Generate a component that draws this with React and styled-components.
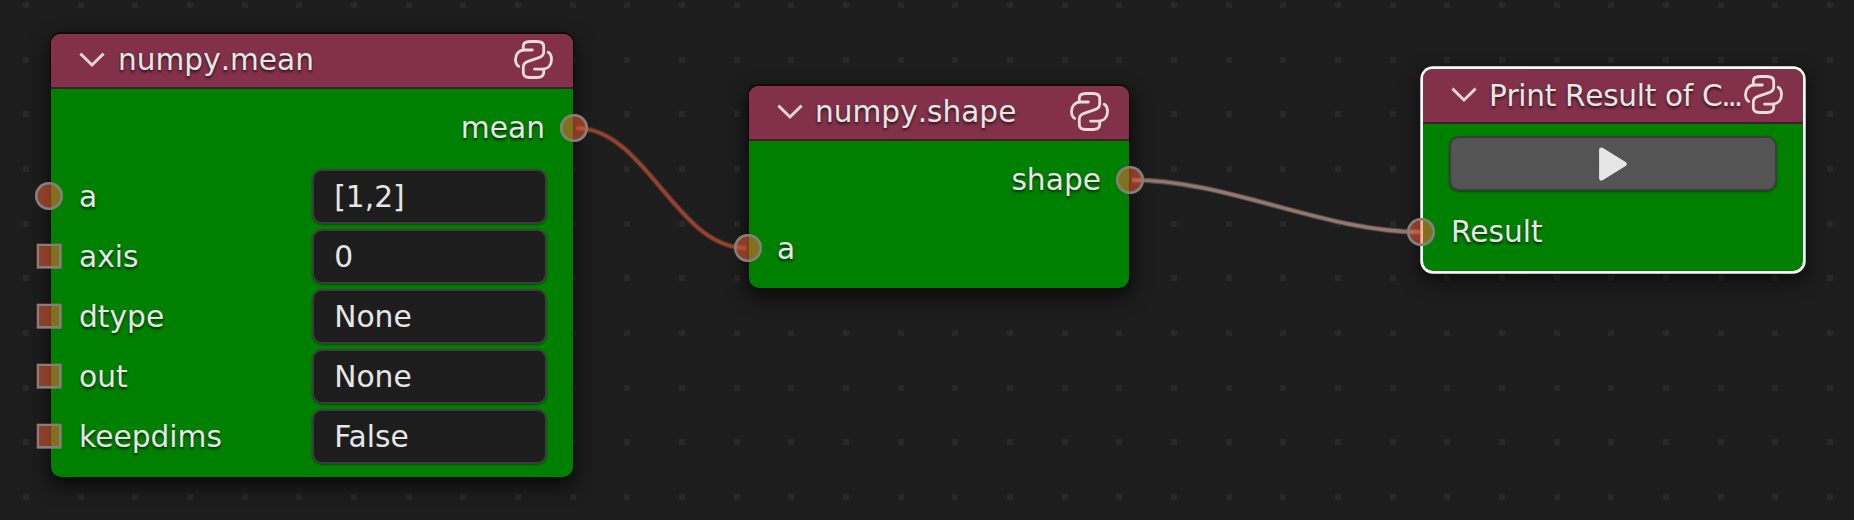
import React from 'react';
import styled, { createGlobalStyle } from 'styled-components';

const GlobalStyle = createGlobalStyle`
  body { margin: 0; background: #1d1d1d; }
  * { box-sizing: border-box; }
`;

const Canvas = styled.main`
  position: relative;
  width: 1854px;
  height: 520px;
  overflow: hidden;
  background: #1d1d1d;
  color: #e6e6e6;
  font-family: "DejaVu Sans", sans-serif;
  font-size: 29.7px;
`;

const Layer = styled.svg`
  position: absolute;
  inset: 0;
  width: 1854px;
  height: 520px;
`;

const NodeCard = styled.section`
  position: absolute;
  left: ${(p) => p.$x}px;
  top: ${(p) => p.$y}px;
  width: ${(p) => p.$w}px;
  height: ${(p) => p.$h}px;
  display: flex;
  flex-direction: column;
  border-radius: 10px;
  background: #008000;
  box-shadow: ${(p) =>
    p.$selected
      ? '0 0 0 2.7px #fff, 0 7px 18px 4px rgba(0,0,0,0.55)'
      : '0 -1px 0 1px rgba(0,0,0,0.5), 0 7px 18px 3px rgba(0,0,0,0.6)'};
`;

const Header = styled.header`
  display: flex;
  align-items: center;
  flex: none;
  height: 55px;
  padding: 0 20px 2px 28px;
  border-radius: 9px 9px 0 0;
  border-bottom: 2px solid #3f2026;
  background: #83314a;
`;

const Title = styled.h1`
  flex: 1;
  display: flex;
  min-width: 0;
  margin: 0 0 0 ${(p) => p.$gap}px;
  padding-top: ${(p) => p.$drop}px;
  white-space: nowrap;
  font-size: 29.6px;
  font-weight: 400;
  font-kerning: none;
  letter-spacing: ${(p) => (p.$tight ? '-0.32px' : 'normal')};
  line-height: 50px;
  text-shadow: 0 2px 3px rgba(0, 0, 0, 0.7);
`;

const Dots = styled.span`
  margin-left: -1px;
  letter-spacing: -3.2px;
`;

const Icon = styled.svg`
  flex: none;
  display: block;
`;

const Row = styled.div`
  position: relative;
  flex: none;
  display: flex;
  align-items: center;
  justify-content: ${(p) => (p.$out ? 'flex-end' : 'space-between')};
  height: 60px;
  margin-top: ${(p) => p.$gap || 0}px;
  padding: 0 ${(p) => (p.$out ? 28 : 26.4)}px 0 28px;
`;

const Label = styled.span`
  line-height: 40px;
  text-shadow: 0 2px 3px rgba(0, 0, 0, 0.7);
`;

const Field = styled.div`
  width: 234.4px;
  height: 55px;
  padding-left: 20px;
  border: 2px solid #3d3d3d;
  border-radius: 10px;
  background: #1d1d1d;
  line-height: 52px;
  box-shadow: 0 1px 2px rgba(0, 0, 0, 0.4);
`;

const Socket = styled.i`
  position: absolute;
  top: 50%;
  ${(p) => (p.$out ? 'right: -1px' : `left: ${p.$edge ?? -2}px`)};
  width: ${(p) => (p.$square ? 25 : 28)}px;
  height: ${(p) => (p.$square ? 25 : 28)}px;
  margin-top: -0.5px;
  border-radius: ${(p) => (p.$square ? 0 : '50%')};
  background: rgba(255, 99, 56, 0.5);
  box-shadow: inset 0 0 0 2.6px #808080;
  transform: translate(${(p) => (p.$out ? '50%' : '-50%')}, -50%);
`;

const RunButton = styled.button`
  flex: none;
  display: flex;
  align-items: center;
  justify-content: center;
  height: 55px;
  margin: 12px 26px 0;
  padding: 0;
  border: 2px solid #3d3d3d;
  border-radius: 10px;
  background: #545454;
  box-shadow: 0 1px 2px rgba(0, 0, 0, 0.4);
`;

const Chevron = () => (
  <Icon width="26" height="18" viewBox="0 0 26 18" fill="none">
    <path d="M1.4 2.6 13 14 24.6 2.6" stroke="#e3d4d9" strokeWidth="2.9" />
  </Icon>
);

const Python = () => (
  <Icon width="39" height="39" viewBox="0 0 39 39" fill="none" stroke="#e6dcdf" strokeWidth="2.8" strokeLinecap="round">
    <path d="M18.3 10H11C4.5 10 1.5 14.5 1.5 19.5C1.5 22.5 2.5 25 4.7 26.4" />
    <path d="M9.3 9.5V6.2C9.3 2.8 12.2 1.5 16 1.5H23C27.2 1.5 29.7 3 29.7 6.5V12C29.7 15.2 28.4 16.5 25 17.6L14 21.4C10.6 22.6 9.3 24 9.3 27V32.5C9.3 36 11.5 37.5 15.5 37.5H23C27.2 37.5 29.7 36 29.7 32.5V29.3" />
    <path d="M20.5 29.1H28C34.5 29.1 37.5 24.5 37.5 19.5C37.5 16.4 36.2 13.4 34.2 12.3" />
  </Icon>
);

const Play = () => (
  <Icon width="28" height="34" viewBox="0 0 28 34">
    <path d="M2.4 2.8 25.4 17 2.4 31.2Z" fill="#e6e6e6" stroke="#e6e6e6" strokeWidth="4.6" strokeLinejoin="round" />
  </Icon>
);

const NodeHeader = ({ title, clipped, gap = 12, drop = 0 }) => (
  <Header>
    <Chevron />
    <Title $gap={gap} $drop={drop} $tight={clipped}>
      {title}
      {clipped && <Dots>...</Dots>}
    </Title>
    <Python />
  </Header>
);

const Wire = ({ d, color }) => (
  <g stroke={color}>
    <path d={d} strokeWidth="5.4" strokeOpacity="0.5" />
    <path d={d} strokeWidth="3.2" />
  </g>
);

const PITCH = 54.67;
const dots = [];
for (let r = 0; r < 10; r += 1) {
  for (let c = 0; c < 34; c += 1) {
    dots.push([Math.round(23 + c * PITCH), Math.round(2 + r * PITCH)]);
  }
}

const params = [
  ['a', '[1,2]'],
  ['axis', '0'],
  ['dtype', 'None'],
  ['out', 'None'],
  ['keepdims', 'False'],
];

export default function App() {
  return (
    <Canvas>
      <GlobalStyle />
      <Layer fill="none">
        {dots.map(([x, y]) => (
          <rect key={`${x}-${y}`} x={x} y={y} width="6" height="6" fill="#282828" />
        ))}
        <Wire d="M576 128C646 128 676 248 746 248" color="#92442e" />
        <Wire d="M1132 180C1228 180 1324 232 1420 232" color="#94776f" />
      </Layer>

      <NodeCard $x={51} $y={34} $w={522} $h={442.5}>
        <NodeHeader title="numpy.mean" gap={13} />
        <Row $out $gap={9}>
          <Label>mean</Label>
          <Socket $out />
        </Row>
        {params.map(([name, value], i) => (
          <Row key={name} $gap={i === 0 ? 8.5 : 0}>
            <Socket $square={i > 0} />
            <Label>{name}</Label>
            <Field>{value}</Field>
          </Row>
        ))}
      </NodeCard>

      <NodeCard $x={749} $y={86} $w={380} $h={202}>
        <NodeHeader title="numpy.shape" />
        <Row $out $gap={9}>
          <Label>shape</Label>
          <Socket $out />
        </Row>
        <Row $gap={8.5}>
          <Socket $edge={-1.5} />
          <Label>a</Label>
        </Row>
      </NodeCard>

      <NodeCard $x={1423} $y={69} $w={380} $h={202} $selected>
        <NodeHeader title="Print Result of C" clipped drop={3} />
        <RunButton aria-label="Run">
          <Play />
        </RunButton>
        <Row $gap={11}>
          <Socket />
          <Label>Result</Label>
        </Row>
      </NodeCard>
    </Canvas>
  );
}
